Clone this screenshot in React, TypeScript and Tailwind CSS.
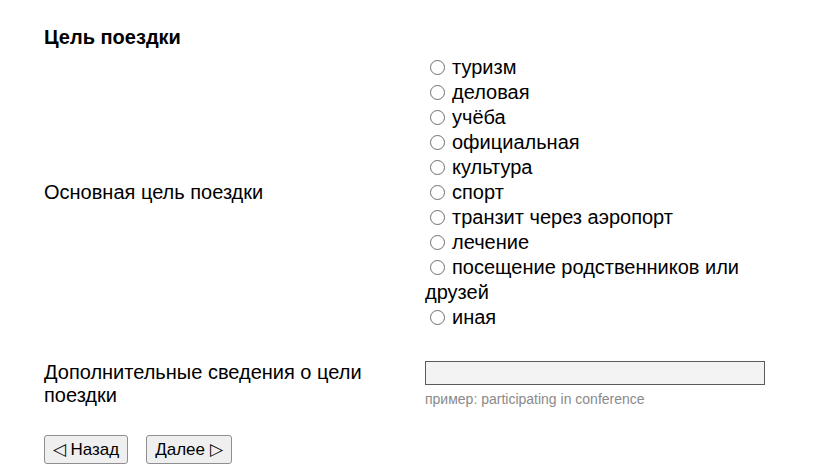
import { useState } from "react";

const purposes = [
  "туризм",
  "деловая",
  "учёба",
  "официальная",
  "культура",
  "спорт",
  "транзит через аэропорт",
  "лечение",
  "посещение родственников или друзей",
  "иная",
];

export default function App() {
  const [purpose, setPurpose] = useState("");

  return (
    <div className="min-h-screen bg-white pl-[44px] pt-[26px] text-[20px] text-black [font-family:'Liberation_Sans',Arial,sans-serif]">
      <h2 className="text-[20px] font-bold leading-[23px]">Цель поездки</h2>

      <div className="mt-[6px] grid grid-cols-[381px_340px] items-center">
        <div className="leading-[23px]">Основная цель поездки</div>
        <div className="leading-[25px]">
          {purposes.map((p) => (
            <div key={p}>
              <input
                type="radio"
                name="purpose"
                id={p}
                checked={purpose === p}
                onChange={() => setPurpose(p)}
                className="ml-[5px] mr-[7px] inline-block h-[15px] w-[15px] appearance-none rounded-full border border-[#6f6f6f] bg-white align-[-1px] checked:border-[5px] checked:border-[#0075ff]"
              />
              <label htmlFor={p}>{p}</label>
            </div>
          ))}
        </div>
      </div>

      <div className="mt-[30px] grid grid-cols-[381px_340px] items-center">
        <div className="leading-[23px]">Дополнительные сведения о цели поездки</div>
        <div className="pt-[1px]">
          <input
            type="text"
            className="block h-[24px] w-[340px] border border-[#5a5a5a] bg-[#f3f3f3] px-1 text-[14px]"
          />
          <div className="mt-[6px] text-[14px] leading-[16px] text-[#8a8a8a]">
            пример: participating in conference
          </div>
        </div>
      </div>

      <div className="mt-[28px] flex gap-[18px]">
        <button className="h-[29px] w-[84px] rounded-[3px] border border-[#8f8f8f] bg-[#efefef] text-[17px] leading-[27px]">
          ◁ Назад
        </button>
        <button className="h-[29px] w-[86px] rounded-[3px] border border-[#8f8f8f] bg-[#efefef] text-[17px] leading-[27px]">
          Далее ▷
        </button>
      </div>
    </div>
  );
}
